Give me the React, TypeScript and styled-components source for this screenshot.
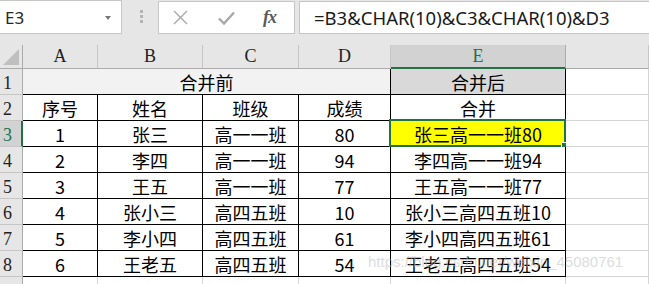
import React from "react";
import styled, { createGlobalStyle, css } from "styled-components";

const Global = createGlobalStyle`
  html, body { margin: 0; padding: 0; width: 649px; height: 284px; overflow: hidden; background: #ffffff; }
  * { box-sizing: border-box; }
`;

const GREEN = "#217346";

const Page = styled.div`
  position: relative;
  width: 649px;
  height: 284px;
  overflow: hidden;
  background: #e6e6e6;
`;

const Toolbar = styled.div`
  display: flex;
  align-items: flex-start;
  height: 45px;
  background: #e6e6e6;
`;

const NameBox = styled.div`
  position: relative;
  display: flex;
  align-items: center;
  width: 123px;
  height: 34px;
  margin-left: -1px;
  padding-left: 5px;
  background: #ffffff;
  border: 1px solid #c6c6c6;
  font-family: "Noto Sans", sans-serif;
  font-size: 17px;
  color: #262626;
`;

const DropArrow = styled.span`
  position: absolute;
  right: 10px;
  top: 15px;
  width: 0;
  height: 0;
  border-left: 3.5px solid transparent;
  border-right: 3.5px solid transparent;
  border-top: 4px solid #777;
`;

const Grip = styled.div`
  display: flex;
  flex-direction: column;
  gap: 2px;
  margin: 10px 15px 0 18px;
`;

const GripDot = styled.span`
  width: 3px;
  height: 3px;
  background: #b4b4b4;
`;

const FuncBox = styled.div`
  display: flex;
  align-items: center;
  width: 137px;
  height: 33px;
  margin-top: 1px;
  padding-left: 14px;
  gap: 30px;
  background: #ffffff;
  border: 1px solid #c6c6c6;
`;

const Fx = styled.span`
  font-family: "Liberation Serif", serif;
  font-style: italic;
  font-weight: bold;
  font-size: 18px;
  color: #595959;
  letter-spacing: -1px;
  margin-left: -2px;
`;

const FormulaBox = styled.div`
  flex: 1;
  display: flex;
  align-items: center;
  height: 33px;
  margin-top: 1px;
  margin-left: 4px;
  padding-left: 14px;
  background: #ffffff;
  border: 1px solid #c6c6c6;
  border-right: none;
  font-family: "Noto Sans", sans-serif;
  font-size: 18.5px;
  color: #1a1a1a;
  white-space: nowrap;
`;

const Sheet = styled.div`
  display: grid;
  grid-template-columns: 23px 75px 105px 96px 92px 175px 1fr;
  grid-template-rows: 24px repeat(9, 26px);
  background: #ffffff;
`;

const Corner = styled.div`
  position: relative;
  background: #e6e6e6;
  border-right: 1px solid #ababab;
  border-bottom: 1px solid #ababab;
  &::after {
    content: "";
    position: absolute;
    right: 3px;
    bottom: 3px;
    width: 0;
    height: 0;
    border-left: 16px solid transparent;
    border-bottom: 16px solid #bfbfbf;
  }
`;

const ColHead = styled.div<{ $active?: boolean }>`
  display: flex;
  align-items: center;
  justify-content: center;
  background: #e6e6e6;
  border-right: 1px solid #c6c6c6;
  border-bottom: 1px solid #ababab;
  font-family: "Liberation Serif", serif;
  font-size: 18px;
  color: #222;
  ${(p) =>
    p.$active &&
    css`
      background: #d2d2d2;
      color: ${GREEN};
      border-bottom: 2px solid ${GREEN};
      border-right-color: #ababab;
    `}
`;

const RowHead = styled.div<{ $active?: boolean }>`
  display: flex;
  align-items: center;
  padding-left: 3px;
  padding-top: 3px;
  background: #e6e6e6;
  border-right: 1px solid #ababab;
  border-bottom: 1px solid #c6c6c6;
  font-family: "Liberation Serif", serif;
  font-size: 18px;
  color: #222;
  ${(p) =>
    p.$active &&
    css`
      background: #d2d2d2;
      color: ${GREEN};
      border-right: 2px solid ${GREEN};
    `}
`;

const Cell = styled.div<{ $span?: number; $fill?: string; $plain?: boolean }>`
  position: relative;
  display: flex;
  align-items: center;
  justify-content: center;
  grid-column: span ${(p) => p.$span ?? 1};
  background: ${(p) => p.$fill ?? "#ffffff"};
  border-right: 1px solid ${(p) => (p.$plain ? "#d4d4d4" : "#000000")};
  border-bottom: 1px solid ${(p) => (p.$plain ? "#d4d4d4" : "#000000")};
  font-family: "Noto Sans CJK SC", "Noto Sans", sans-serif;
  font-size: 18px;
  line-height: 1;
  color: #000;
  white-space: nowrap;
`;

const Selection = styled.div`
  position: absolute;
  left: -2px;
  top: -2px;
  right: -1px;
  bottom: -1px;
  border: 2px solid ${GREEN};
  pointer-events: none;
  &::after {
    content: "";
    position: absolute;
    right: -5px;
    bottom: -5px;
    width: 6px;
    height: 6px;
    background: ${GREEN};
    border: 1px solid #ffffff;
  }
`;

const Watermark = styled.div`
  position: absolute;
  left: 368px;
  top: 253px;
  font-family: "Liberation Sans", sans-serif;
  font-size: 15px;
  color: rgba(190, 190, 190, 0.55);
  white-space: nowrap;
  pointer-events: none;
`;

const cols = ["A", "B", "C", "D", "E"];

const rows: string[][] = [
  ["序号", "姓名", "班级", "成绩", "合并"],
  ["1", "张三", "高一一班", "80", "张三高一一班80"],
  ["2", "李四", "高一一班", "94", "李四高一一班94"],
  ["3", "王五", "高一一班", "77", "王五高一一班77"],
  ["4", "张小三", "高四五班", "10", "张小三高四五班10"],
  ["5", "李小四", "高四五班", "61", "李小四高四五班61"],
  ["6", "王老五", "高四五班", "54", "王老五高四五班54"],
];

export default function App() {
  return (
    <Page>
      <Global />
      <Toolbar>
        <NameBox>
          E3
          <DropArrow />
        </NameBox>
        <Grip>
          <GripDot />
          <GripDot />
          <GripDot />
        </Grip>
        <FuncBox>
          <svg width="15" height="15" viewBox="0 0 15 15">
            <path d="M1 1 L14 14 M14 1 L1 14" stroke="#a8a8a8" strokeWidth="1.4" fill="none" />
          </svg>
          <svg width="17" height="14" viewBox="0 0 17 14">
            <path d="M1 7.5 L6 12.5 L16 1.5" stroke="#a8a8a8" strokeWidth="2.4" fill="none" />
          </svg>
          <Fx>fx</Fx>
        </FuncBox>
        <FormulaBox>=B3&amp;CHAR(10)&amp;C3&amp;CHAR(10)&amp;D3</FormulaBox>
      </Toolbar>
      <Sheet>
        <Corner />
        {cols.map((c) => (
          <ColHead key={c} $active={c === "E"}>
            {c}
          </ColHead>
        ))}
        <ColHead />

        <RowHead>1</RowHead>
        <Cell $span={4} $fill="#f2f2f2">合并前</Cell>
        <Cell $fill="#d9d9d9">合并后</Cell>
        <Cell $plain />

        {rows.map((r, i) => (
          <React.Fragment key={i}>
            <RowHead $active={i === 1}>{i + 2}</RowHead>
            {r.map((v, j) => (
              <Cell key={j} $fill={i === 1 && j === 4 ? "#ffff00" : undefined}>
                {v}
                {i === 1 && j === 4 && <Selection />}
              </Cell>
            ))}
            <Cell $plain />
          </React.Fragment>
        ))}

        <RowHead />
        {cols.map((c) => (
          <Cell key={c} $plain />
        ))}
        <Cell $plain />
      </Sheet>
      <Watermark>https://blog.csdn.net/weixin_45080761</Watermark>
    </Page>
  );
}
